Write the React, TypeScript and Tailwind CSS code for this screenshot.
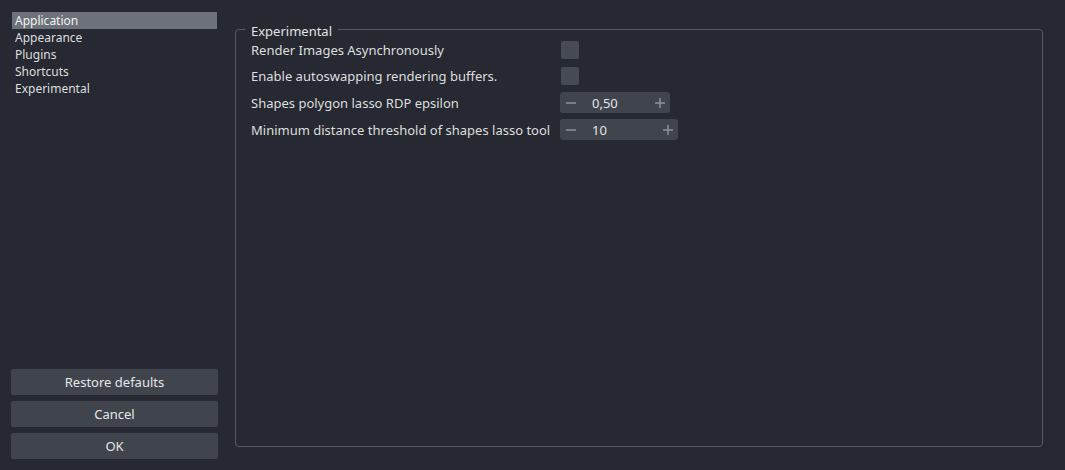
import React from 'react';

const pages = ['Application', 'Appearance', 'Plugins', 'Shortcuts', 'Experimental'];

function Minus() {
  return (
    <svg width="10" height="10" viewBox="0 0 10 10" className="shrink-0">
      <line x1="0" y1="5" x2="10" y2="5" stroke="#8d9097" strokeWidth="1.5" />
    </svg>
  );
}

function Plus() {
  return (
    <svg width="10" height="10" viewBox="0 0 10 10" className="shrink-0">
      <line x1="0" y1="5" x2="10" y2="5" stroke="#8d9097" strokeWidth="1.5" />
      <line x1="5" y1="0" x2="5" y2="10" stroke="#8d9097" strokeWidth="1.5" />
    </svg>
  );
}

function SpinBox({ value, width }: { value: string; width: string }) {
  return (
    <div className={`${width} h-[21px] bg-[#40444d] rounded-[3px] flex items-center pl-[6px] pr-[5px]`}>
      <Minus />
      <span className="ml-[16px] pt-[2px] flex-1 text-[#e4e4e4]">{value}</span>
      <Plus />
    </div>
  );
}

function Checkbox() {
  return <div className="w-[18px] h-[18px] ml-px bg-[#464a53] rounded-[2px]" />;
}

export default function App() {
  return (
    <div
      className="w-[1065px] h-[470px] bg-[#262932] flex text-[13px] text-[#dedede]"
      style={{ fontFamily: '"Noto Sans", "Open Sans", sans-serif' }}
    >
      {/* sidebar */}
      <div className="w-[207px] ml-[11px] pt-[12px] pb-[11px] flex flex-col">
        <ul className="mx-px leading-[17px] text-[12px]">
          {pages.map((p, i) => (
            <li key={p} className={`pl-[3px] ${i === 0 ? 'bg-[#6c717a] text-[#f2f2f2]' : ''}`}>
              {p}
            </li>
          ))}
        </ul>
        <div className="mt-auto flex flex-col gap-[6px]">
          {['Restore defaults', 'Cancel', 'OK'].map((b) => (
            <button
              key={b}
              className="h-[26px] pt-[2px] bg-[#40444d] rounded-[2px] text-[#e6e6e6] text-center"
            >
              {b}
            </button>
          ))}
        </div>
      </div>

      {/* settings page */}
      <div className="flex-1 pl-[17px] pr-[22px] pt-[19px] pb-[23px] flex">
        <fieldset className="flex-1 border border-[#555962] rounded-[4px] pl-[15px] pr-[15px] pb-0 pt-0 m-0 min-w-0">
          <legend className="ml-[-6px] px-[6px] pt-[4px] leading-[17px] text-[#e2e2e2]">Experimental</legend>
          <div className="flex flex-col pt-[1px]">
            <div className="flex items-center h-[18px]">
              <span className="w-[309px] pt-[2px]">Render Images Asynchronously</span>
              <Checkbox />
            </div>
            <div className="flex items-center h-[18px] mt-[8px]">
              <span className="w-[309px] pt-[2px]">Enable autoswapping rendering buffers.</span>
              <Checkbox />
            </div>
            <div className="flex items-center h-[21px] mt-[7px]">
              <span className="w-[309px] pt-[2px]">Shapes polygon lasso RDP epsilon</span>
              <SpinBox value="0,50" width="w-[110px]" />
            </div>
            <div className="flex items-center h-[21px] mt-[6px]">
              <span className="w-[309px] pt-[2px]">Minimum distance threshold of shapes lasso tool</span>
              <SpinBox value="10" width="w-[118px]" />
            </div>
          </div>
        </fieldset>
      </div>
    </div>
  );
}
